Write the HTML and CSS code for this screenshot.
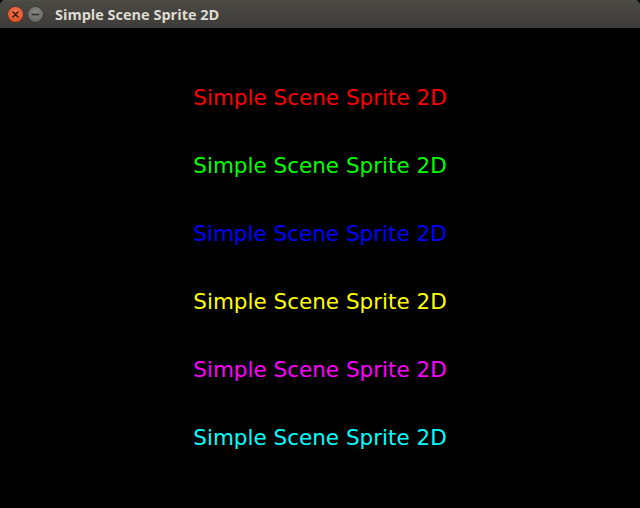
FILE: index.html
```html
<!DOCTYPE html>
<html>
<head>
<meta charset="utf-8">
<link rel="stylesheet" href="styles.css">
</head>
<body>
<div class="window">
  <div class="titlebar">
    <div class="btn close"><svg width="15" height="15" viewBox="0 0 15 15"><path d="M5 5 L10 10 M10 5 L5 10" stroke="#3a1a10" stroke-width="1.6" stroke-linecap="round"/></svg></div>
    <div class="btn minimize"><svg width="15" height="15" viewBox="0 0 15 15"><path d="M4.5 7.5 L10.5 7.5" stroke="#2f2e2b" stroke-width="1.6" stroke-linecap="round"/></svg></div>
    <span class="title">Simple Scene Sprite 2D</span>
  </div>
  <div class="content">
    <div class="line red">Simple Scene Sprite 2D</div>
    <div class="line green">Simple Scene Sprite 2D</div>
    <div class="line blue">Simple Scene Sprite 2D</div>
    <div class="line yellow">Simple Scene Sprite 2D</div>
    <div class="line magenta">Simple Scene Sprite 2D</div>
    <div class="line cyan">Simple Scene Sprite 2D</div>
  </div>
</div>
</body>
</html>
```
FILE: styles.css
```css
html, body {
  margin: 0;
  padding: 0;
  background: #000;
  width: 640px;
  height: 508px;
  overflow: hidden;
}
.window {
  display: flex;
  flex-direction: column;
  height: 508px;
}
.titlebar {
  height: 28px;
  flex: none;
  display: flex;
  align-items: center;
  padding-left: 8px;
  gap: 5px;
  background: linear-gradient(#55534e 0px, #4a4944 1px, #3e3d39 27px);
  box-sizing: border-box;
  border-radius: 5px 5px 0 0;
}
.btn {
  width: 15px;
  height: 15px;
  border-radius: 50%;
  display: flex;
}
.close {
  background: radial-gradient(circle at 50% 35%, #f47a52, #e5532c 70%, #b83d1c);
  box-shadow: 0 0 0 0.5px #7a2a14;
}
.minimize {
  background: radial-gradient(circle at 50% 35%, #8a8883, #6d6b66 70%, #55534f);
  box-shadow: 0 0 0 0.5px #2e2d2a;
}
.title {
  margin-left: 7px;
  font-family: "Open Sans", "DejaVu Sans", sans-serif;
  font-weight: 700;
  font-size: 14.5px;
  color: #dfdbd2;
}
.content {
  display: flex;
  flex-direction: column;
  align-items: center;
  padding-top: 36px;
}
.line {
  height: 68px;
  line-height: 68px;
  font-family: "DejaVu Sans", sans-serif;
  font-size: 21.5px;
  white-space: nowrap;
}
.red { color: #ff0000; }
.green { color: #00ff00; }
.blue { color: #0000ff; }
.yellow { color: #ffff00; }
.magenta { color: #ff00ff; }
.cyan { color: #00ffff; }
```
